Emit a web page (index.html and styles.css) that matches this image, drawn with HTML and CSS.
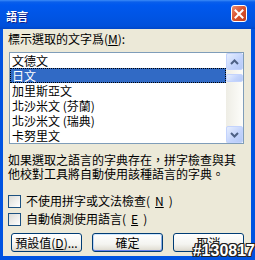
FILE: index.html
```html
<!DOCTYPE html>
<html lang="zh-TW">
<head>
    <meta charset="UTF-8">
    <meta name="viewport" content="width=device-width, initial-scale=1.0">
    <title>語言</title>
    <link rel="stylesheet" href="styles.css">
</head>
<body>
    <div class="window">
        <div class="titlebar">
            <span class="title">語言</span>
            <button class="close">
                <svg width="10" height="10" viewBox="0 0 10 10">
                    <path d="M1.5 1.5 L8.5 8.5 M8.5 1.5 L1.5 8.5" stroke="#fff" stroke-width="2" stroke-linecap="square" fill="none"/>
                </svg>
            </button>
        </div>

        <div class="content">
            <div class="label">標示選取的文字爲(<u>M</u>):</div>

            <div class="listbox">
                <ul class="items">
                    <li>文德文</li>
                    <li class="selected">日文</li>
                    <li>加里斯亞文</li>
                    <li>北沙米文 (芬蘭)</li>
                    <li>北沙米文 (瑞典)</li>
                    <li>卡努里文</li>
                </ul>
                <div class="scrollbar">
                    <div class="sb-btn">
                        <svg width="9" height="6" viewBox="0 0 9 6">
                            <path d="M1 5 L4.5 1.5 L8 5" stroke="#4D6185" stroke-width="2" fill="none"/>
                        </svg>
                    </div>
                    <div class="sb-track">
                        <div class="sb-thumb"></div>
                    </div>
                    <div class="sb-btn">
                        <svg width="9" height="6" viewBox="0 0 9 6">
                            <path d="M1 1 L4.5 4.5 L8 1" stroke="#4D6185" stroke-width="2" fill="none"/>
                        </svg>
                    </div>
                </div>
            </div>

            <p class="note">如果選取之語言的字典存在，拼字檢查與其<br>他校對工具將自動使用該種語言的字典。</p>

            <label class="check first"><span class="box"></span>不使用拼字或文法檢查(<u>N</u>)</label>
            <label class="check"><span class="box"></span>自動偵測使用語言(<u>E</u>)</label>

            <div class="buttons">
                <button class="btn">預設值(<u>D</u>)...</button>
                <button class="btn default">確定</button>
                <button class="btn">取消</button>
            </div>
        </div>

        <div class="watermark">#130817</div>
    </div>
</body>
</html>
```

FILE: styles.css
```css
body {
    margin: 0;
    font-family: "Noto Sans CJK TC", sans-serif;
    font-size: 12px;
    color: #000;
}
.window {
    position: relative;
    width: 255px;
    height: 260px;
    display: flex;
    flex-direction: column;
    background: #0053E1;
    overflow: hidden;
}
.titlebar {
    height: 29px;
    flex-shrink: 0;
    display: flex;
    justify-content: space-between;
    align-items: flex-start;
    padding: 0 8px 0 6px;
    background: linear-gradient(#3C8BF7 0, #0A5FEB 2px, #0058EE 5px, #0054E3 18px, #0050DB 26px, #0046C8 29px);
}
.title {
    color: #fff;
    font-weight: bold;
    font-size: 11px;
    line-height: 13px;
    margin-top: 10px;
    text-shadow: 1px 1px #0F1E89;
}
.close {
    width: 16px;
    height: 17px;
    margin-top: 5px;
    padding: 0;
    border: 1px solid #fff;
    border-radius: 3px;
    background: linear-gradient(135deg, #EC8F72 0%, #DA5431 45%, #C2401D 100%);
    display: flex;
    align-items: center;
    justify-content: center;
}
.content {
    flex: 1;
    margin: 0 4px 4px 3px;
    padding: 3px 0 0 5px;
    background: #ECE9D8;
    display: flex;
    flex-direction: column;
}
.label {
    line-height: 14px;
}
.listbox {
    box-sizing: border-box;
    width: 235px;
    height: 92px;
    margin: 6px 0 0 1px;
    border: 1px solid #7F9DB9;
    background: #fff;
    display: flex;
}
.items {
    flex: 1;
    list-style: none;
    margin: 0;
    padding: 0;
}
.items li {
    box-sizing: border-box;
    height: 15px;
    line-height: 15px;
    padding-left: 2px;
    white-space: nowrap;
}
.items li.selected {
    background: #316AC5;
    color: #fff;
    border: 1px dotted #000;
    line-height: 13px;
    padding-left: 1px;
}
.scrollbar {
    width: 17px;
    display: flex;
    flex-direction: column;
    background: linear-gradient(90deg, #EEEDE5, #FDFDFA);
}
.sb-btn, .sb-thumb {
    box-sizing: border-box;
    border: 1px solid #C3D3FD;
    border-radius: 2px;
    background: linear-gradient(135deg, #E6EEFE, #C2D3FC 60%, #B5C9F6);
    display: flex;
    align-items: center;
    justify-content: center;
}
.sb-btn {
    height: 17px;
}
.sb-track {
    flex: 1;
    padding-top: 4px;
}
.sb-thumb {
    height: 8px;
}
.note {
    margin: 9px 0 0;
    line-height: 14px;
}
.check {
    display: flex;
    align-items: center;
    gap: 5px;
    height: 14px;
    line-height: 14px;
    margin-top: 4px;
}
.check.first {
    margin-top: 13px;
}
.box {
    box-sizing: border-box;
    width: 13px;
    height: 13px;
    border: 1px solid #1C5180;
    background: linear-gradient(135deg, #DCDCD7, #FFFFFF);
}
.buttons {
    display: flex;
    gap: 10px;
    margin-top: 7px;
    padding-left: 3px;
}
.btn {
    width: 71px;
    height: 19px;
    padding: 0;
    font-family: "Noto Sans CJK TC", sans-serif;
    font-size: 12px;
    line-height: 17px;
    color: #000;
    border: 1px solid #003C74;
    border-radius: 3px;
    background: linear-gradient(#FFFFFF, #F4F4F0 60%, #E3E0D6 90%, #D6D0C5);
}
.btn.default {
    box-shadow: inset 0 1px #CEE7FF, inset 0 -1px #6982EE, inset 1px 0 #BCD4F6, inset -1px 0 #89ADE4;
}
.watermark {
    position: absolute;
    right: 0;
    bottom: 1px;
    font-family: "Liberation Sans", sans-serif;
    font-weight: bold;
    font-size: 16px;
    line-height: 16px;
    color: #fff;
    text-shadow: 1px 0 #222, -1px 0 #222, 0 1px #222, 0 -1px #222, 1px 1px #222, -1px -1px #222, 1px -1px #222, -1px 1px #222;
}
```
